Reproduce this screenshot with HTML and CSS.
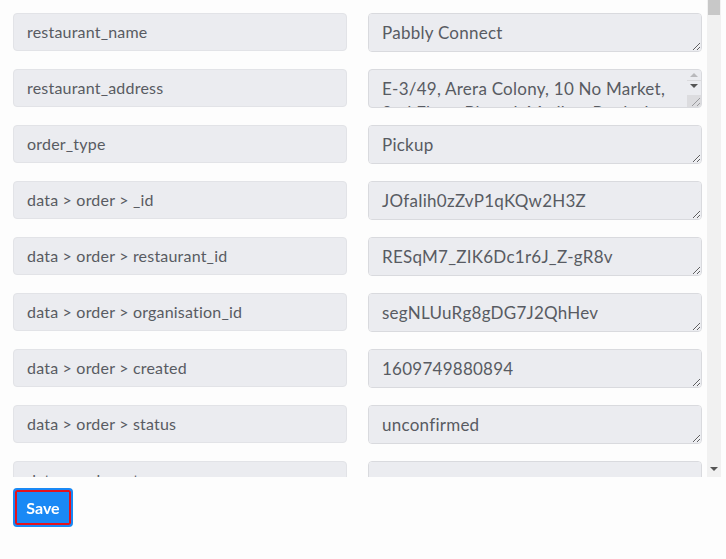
FILE: index.html
```html
<!DOCTYPE html>
<html>
<head>
<meta charset="utf-8">
<link rel="stylesheet" href="styles.css">
</head>
<body>
<div class="panel">
  <div class="fields">
    <div class="grid">
      <div class="label">restaurant_name</div>
      <textarea class="value" rows="1">Pabbly Connect</textarea>
      <div class="label">restaurant_address</div>
      <div class="value-box">
        <textarea class="value-inner" rows="1">E-3/49, Arera Colony, 10 No Market, 2nd Floor, Bhopal, Madhya Pradesh 462016</textarea>
        <div class="mini-bar">
          <div class="mini-btn"><span class="tri-up"></span></div>
          <div class="mini-btn"><span class="tri-down"></span></div>
          <div class="mini-thumb"><span class="grip"></span></div>
        </div>
      </div>
      <div class="label">order_type</div>
      <textarea class="value" rows="1">Pickup</textarea>
      <div class="label">data &gt; order &gt; _id</div>
      <textarea class="value" rows="1">JOfaIih0zZvP1qKQw2H3Z</textarea>
      <div class="label">data &gt; order &gt; restaurant_id</div>
      <textarea class="value" rows="1">RESqM7_ZIK6Dc1r6J_Z-gR8v</textarea>
      <div class="label">data &gt; order &gt; organisation_id</div>
      <textarea class="value" rows="1">segNLUuRg8gDG7J2QhHev</textarea>
      <div class="label">data &gt; order &gt; created</div>
      <textarea class="value" rows="1">1609749880894</textarea>
      <div class="label">data &gt; order &gt; status</div>
      <textarea class="value" rows="1">unconfirmed</textarea>
      <div class="label">data &gt; order &gt; type</div>
      <textarea class="value" rows="1"></textarea>
    </div>
  </div>
  <div class="track">
    <div class="thumb"></div>
    <div class="arrow-down"></div>
  </div>
</div>
<div class="actions">
  <button class="save">Save</button>
</div>
</body>
</html>
```
FILE: styles.css
```css
html, body {
  margin: 0;
  padding: 0;
  background: #fdfdfd;
  font-family: "Lato", "Open Sans", sans-serif;
}
.panel {
  display: flex;
  height: 477px;
  width: 721px;
}
.fields {
  flex: 1;
  overflow: hidden;
  padding: 13px 5px 0 13px;
}
.grid {
  display: grid;
  grid-template-columns: 334px 334px;
  column-gap: 21px;
  row-gap: 17px;
  align-items: start;
}
.label {
  box-sizing: border-box;
  height: 38px;
  background: #ebecf0;
  border: 1px solid #e2e3e7;
  border-radius: 4px;
  padding: 0 13px 2px;
  display: flex;
  align-items: center;
  font-size: 16px;
  letter-spacing: 0.2px;
  color: #585b62;
}
.value {
  box-sizing: border-box;
  display: block;
  width: 334px;
  height: 39px;
  margin: 0;
  background: #ebecf0;
  border: 1px solid #d9dade;
  border-radius: 4px;
  padding: 7px 13px;
  font-family: "Lato", "Open Sans", sans-serif;
  font-size: 17px;
  letter-spacing: 0.25px;
  line-height: 24px;
  color: #585b62;
  resize: vertical;
}
.value-box {
  box-sizing: border-box;
  display: flex;
  width: 334px;
  height: 39px;
  background: #ebecf0;
  border: 1px solid #d9dade;
  border-radius: 4px;
  overflow: hidden;
}
.value-inner {
  flex: 1;
  min-width: 0;
  margin: 0;
  border: 0;
  background: transparent;
  padding: 7px 2px 7px 13px;
  font-family: "Lato", "Open Sans", sans-serif;
  font-size: 17px;
  letter-spacing: 0.25px;
  line-height: 24px;
  color: #585b62;
  resize: none;
  overflow: hidden;
}
.mini-bar {
  width: 14px;
  display: flex;
  flex-direction: column;
  background: #ebecf0;
}
.mini-btn {
  height: 10px;
  display: flex;
  align-items: center;
  justify-content: center;
  border-bottom: 1px solid #dadadd;
}
.tri-up {
  width: 0;
  height: 0;
  border-left: 4px solid transparent;
  border-right: 4px solid transparent;
  border-bottom: 4px solid #b9b9bc;
}
.tri-down {
  width: 0;
  height: 0;
  border-left: 4px solid transparent;
  border-right: 4px solid transparent;
  border-top: 4px solid #555;
}
.mini-btn + .mini-btn {
  border-bottom: 0;
}
.mini-thumb {
  flex: 1;
  margin-top: 4px;
  background: #dcdcdf;
  display: flex;
  align-items: flex-end;
  justify-content: flex-end;
}
.grip {
  width: 8px;
  height: 8px;
  margin: 0 1px 1px 0;
  background:
    linear-gradient(135deg, transparent 46%, #9a9a9d 46%, #9a9a9d 54%, transparent 54%),
    linear-gradient(135deg, transparent 78%, #9a9a9d 78%, #9a9a9d 86%, transparent 86%);
}
.track {
  width: 14px;
  background: #f1f1f1;
  display: flex;
  flex-direction: column;
  align-items: center;
}
.thumb {
  width: 12px;
  height: 15px;
  background: #c8c8c8;
}
.arrow-down {
  margin-top: auto;
  margin-bottom: 6px;
  width: 0;
  height: 0;
  border-left: 4px solid transparent;
  border-right: 4px solid transparent;
  border-top: 4px solid #555;
}
.actions {
  padding: 11px 13px 0;
}
.save {
  box-sizing: border-box;
  width: 60px;
  height: 39px;
  background: #1a89f5;
  border: 2px solid #1a89f5;
  border-radius: 4px;
  box-shadow: inset 0 0 0 2px #e4121c;
  color: #ffffff;
  font-family: "Lato", "Open Sans", sans-serif;
  font-weight: 700;
  font-size: 16px;
  padding: 0;
}
```
